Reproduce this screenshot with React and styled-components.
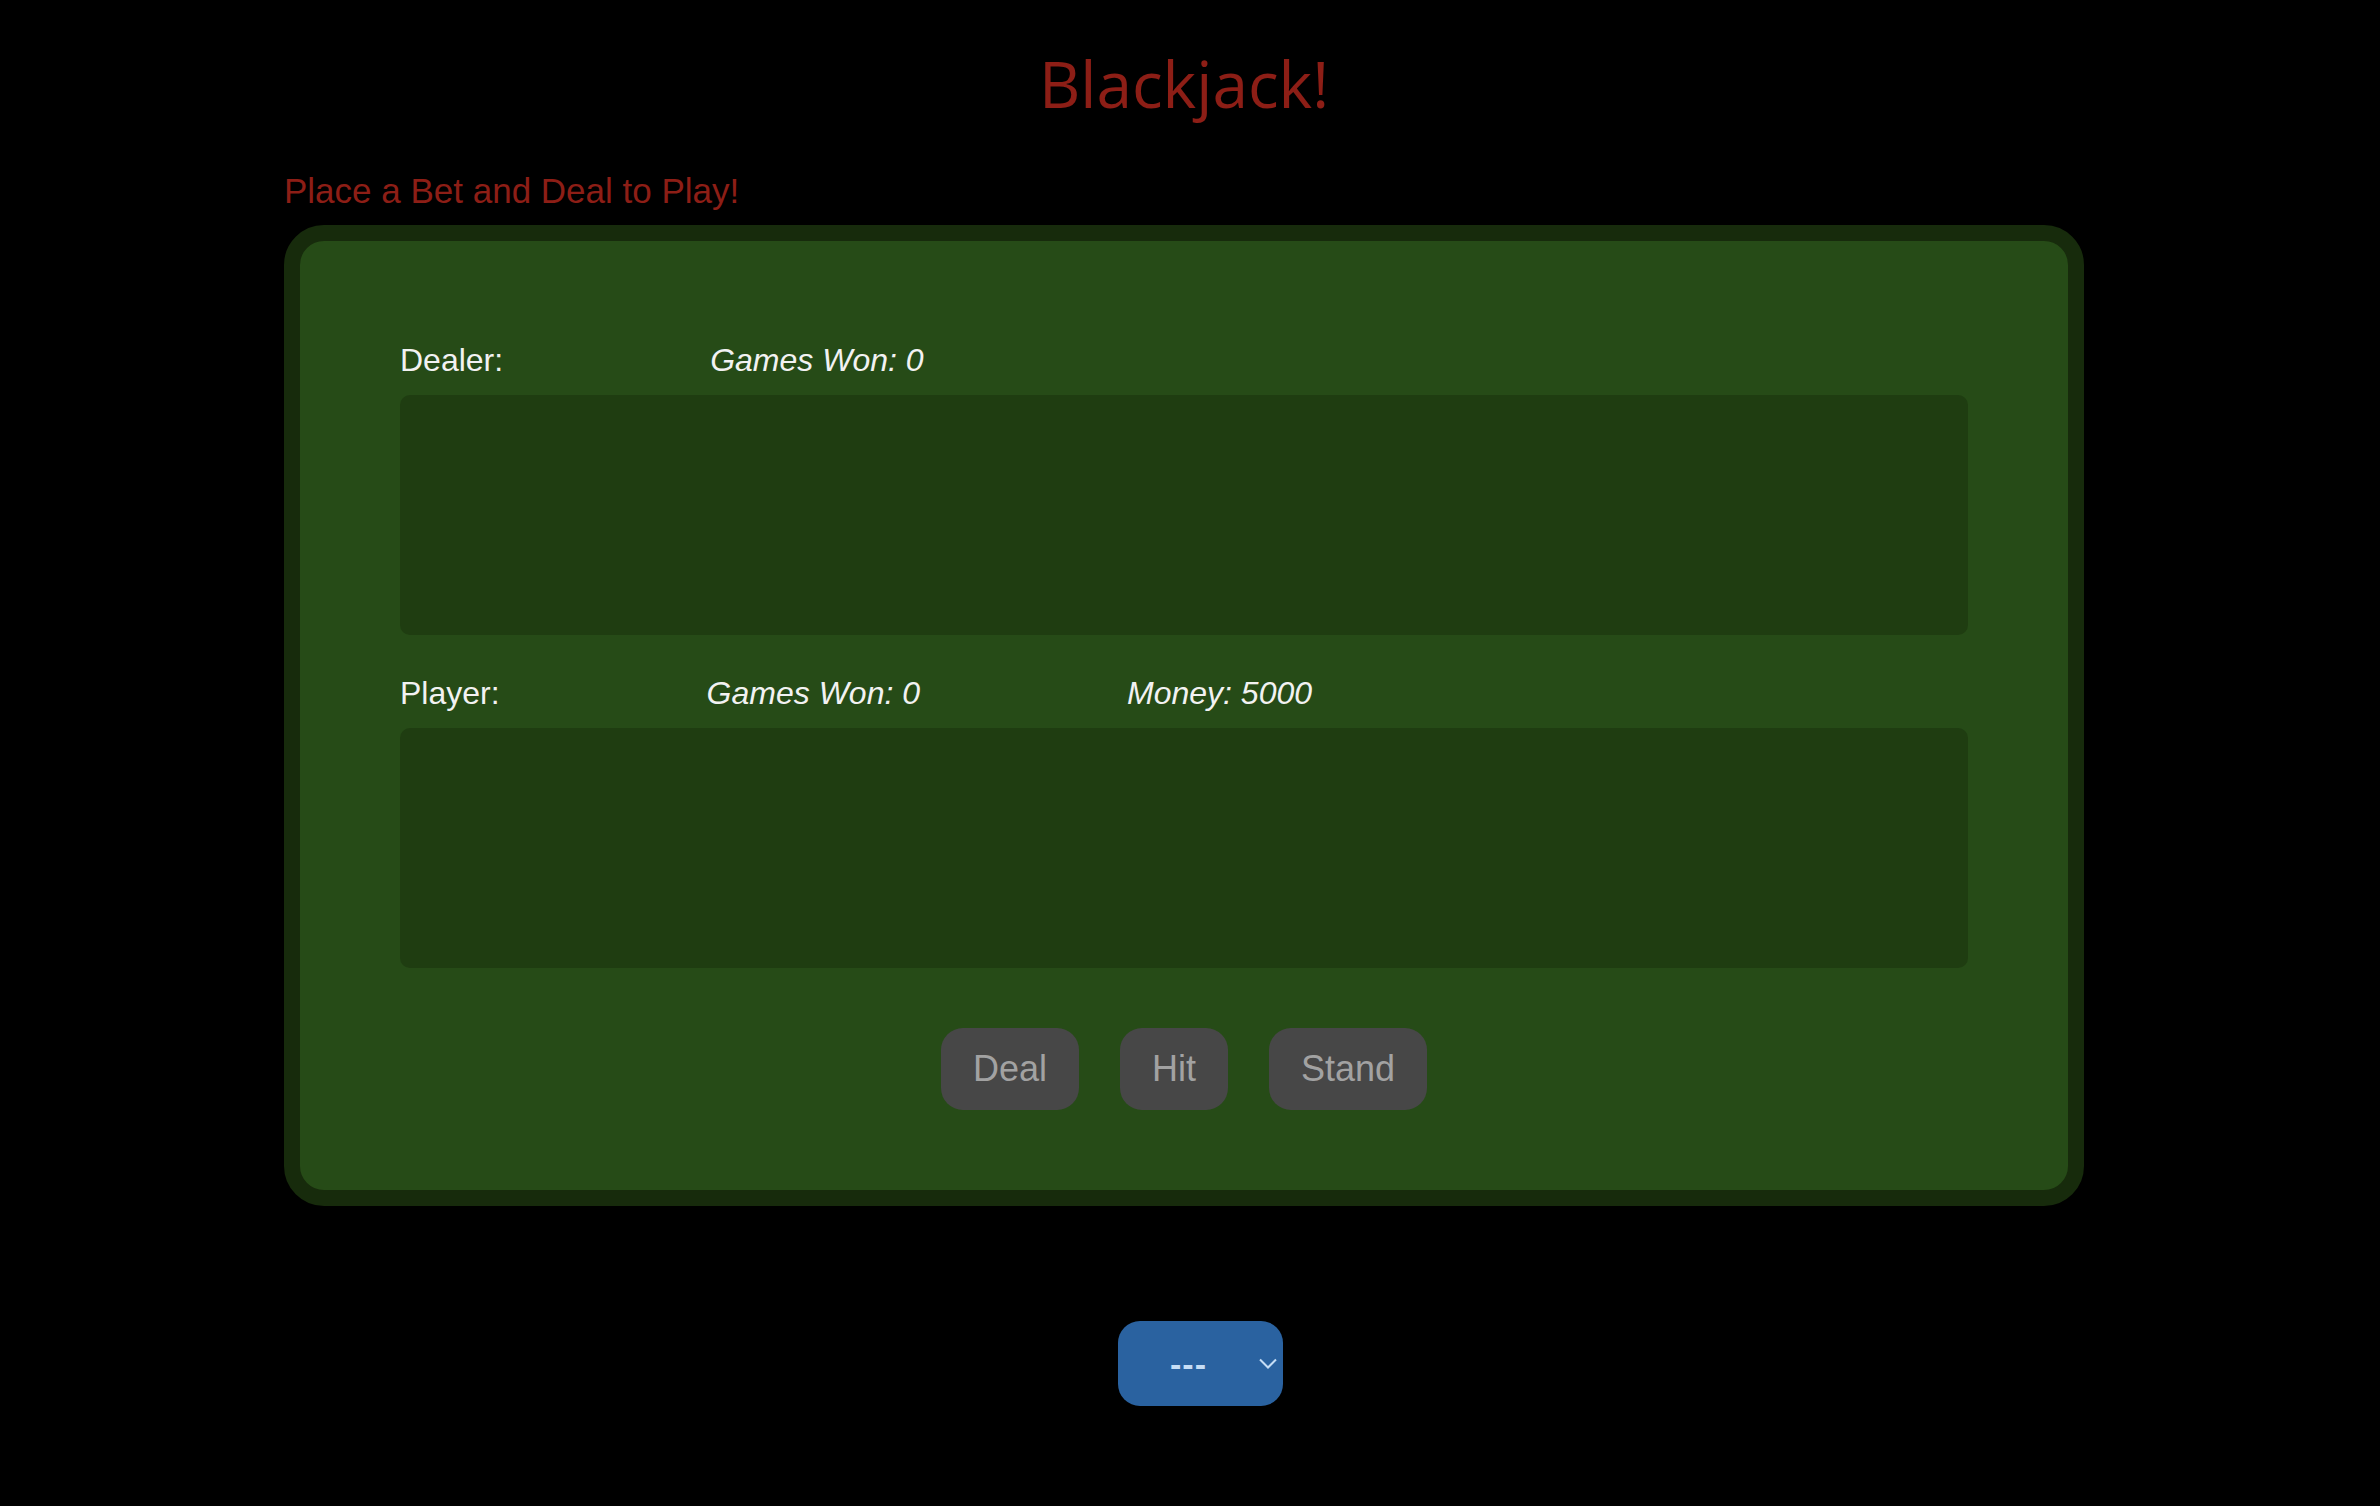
import React, { useState } from 'react';
import styled, { createGlobalStyle } from 'styled-components';

const GlobalStyle = createGlobalStyle`
  html, body {
    margin: 0;
    padding: 0;
    background: #000000;
  }
  body {
    font-family: "Liberation Sans", Arial, sans-serif;
  }
`;

const App = () => {
  const [bet, setBet] = useState('---');

  return (
    <Page>
      <GlobalStyle />
      <Title>Blackjack!</Title>
      <Content>
        <Message>Place a Bet and Deal to Play!</Message>
        <Table>
          <Seat>
            <SeatHeader>
              <span>Dealer:</span>
              <Stat>Games Won: 0</Stat>
            </SeatHeader>
            <Hand />
          </Seat>
          <Seat>
            <SeatHeader>
              <span>Player:</span>
              <Stat>Games Won: 0</Stat>
              <Stat>Money: 5000</Stat>
            </SeatHeader>
            <Hand />
          </Seat>
          <Controls>
            <ActionButton>Deal</ActionButton>
            <ActionButton>Hit</ActionButton>
            <ActionButton>Stand</ActionButton>
          </Controls>
        </Table>
      </Content>
      <BetRow>
        <BetSelectWrap>
          <BetSelect value={bet} onChange={(e) => setBet(e.target.value)}>
            <option value="---">---</option>
            <option value="100">100</option>
            <option value="500">500</option>
            <option value="1000">1000</option>
          </BetSelect>
          <Chevron width="18" height="11" viewBox="0 0 18 11">
            <path d="M1 1.5 L9 9.5 L17 1.5" fill="none" stroke="#c6ddf5" strokeWidth="2" />
          </Chevron>
        </BetSelectWrap>
      </BetRow>
    </Page>
  );
};

// Styled Components
const Page = styled.div`
  display: flex;
  flex-direction: column;
  align-items: center;
  padding-right: 12px;
  min-height: 1506px;
  box-sizing: border-box;
`;

const Title = styled.h1`
  margin: 39px 0 0;
  font-family: "Open Sans", "Noto Sans", sans-serif;
  font-weight: 400;
  font-size: 64px;
  line-height: 90px;
  color: #8d1e16;
`;

const Content = styled.div`
  width: 1800px;
  margin-top: 42px;
`;

const Message = styled.div`
  font-size: 35px;
  line-height: 40px;
  color: #8d1e16;
  margin-bottom: 14px;
`;

const Table = styled.div`
  box-sizing: border-box;
  width: 1800px;
  border: 16px solid #172b0c;
  border-radius: 40px;
  background: #264b17;
  padding: 101px 100px 80px;
  display: flex;
  flex-direction: column;
  gap: 40px;
`;

const Seat = styled.div`
  display: flex;
  flex-direction: column;
  gap: 16px;
`;

const SeatHeader = styled.div`
  display: flex;
  gap: 207px;
  font-size: 32px;
  line-height: 37px;
  color: #f2f2f2;
`;

const Stat = styled.span`
  font-style: italic;
`;

const Hand = styled.div`
  height: 240px;
  border-radius: 10px;
  background: #1f3d11;
`;

const Controls = styled.div`
  display: flex;
  justify-content: center;
  gap: 41px;
  margin-top: 20px;
`;

const ActionButton = styled.button`
  height: 82px;
  padding: 0 32px;
  border: none;
  border-radius: 22px;
  background: #474747;
  color: #a2a2a2;
  font-family: "Liberation Sans", Arial, sans-serif;
  font-size: 36px;
  cursor: pointer;
`;

const BetRow = styled.div`
  display: flex;
  justify-content: center;
  margin-top: 115px;
  padding-left: 33px;
`;

const BetSelectWrap = styled.div`
  position: relative;
  width: 165px;
  height: 85px;
`;

const BetSelect = styled.select`
  appearance: none;
  -webkit-appearance: none;
  width: 100%;
  height: 100%;
  border: none;
  border-radius: 22px;
  background: #2a62a0;
  color: #c6ddf5;
  font-family: "Liberation Sans", Arial, sans-serif;
  font-weight: 700;
  font-size: 34px;
  letter-spacing: 1px;
  text-align: center;
  text-align-last: center;
  padding: 0 24px 0 0;
  outline: none;
`;

const Chevron = styled.svg`
  position: absolute;
  right: 6px;
  top: 37px;
  pointer-events: none;
`;

export default App;
